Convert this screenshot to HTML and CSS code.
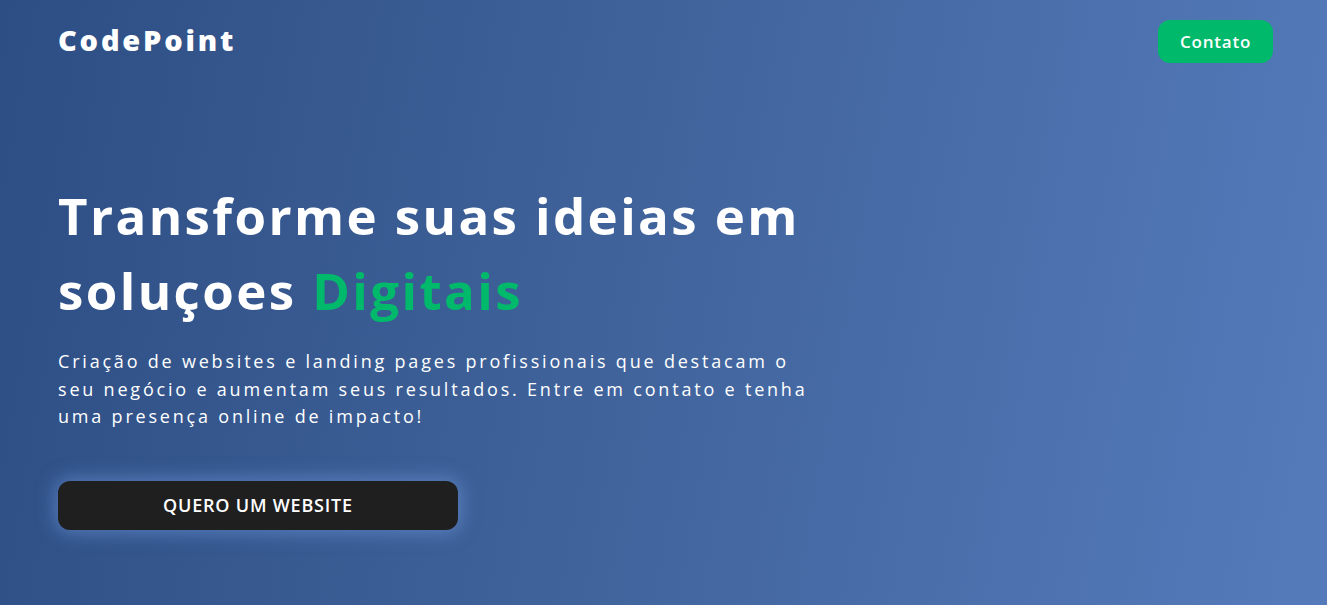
FILE: index.html
```html
<!DOCTYPE html>
<html lang="pt-BR">
<head>
<meta charset="utf-8">
<title>CodePoint</title>
<link rel="stylesheet" href="styles.css">
</head>
<body>
<div class="page">
  <header class="header">
    <div class="logo">CodePoint</div>
    <a class="contact-btn" href="#">Contato</a>
  </header>
  <main class="hero">
    <h1 class="title">Transforme suas ideias em<br>soluçoes <span class="accent">Digitais</span></h1>
    <p class="lead">Criação de websites e landing pages profissionais que destacam o seu negócio e aumentam seus resultados. Entre em contato e tenha uma presença online de impacto!</p>
    <a class="cta" href="#">QUERO UM WEBSITE</a>
  </main>
</div>
</body>
</html>
```
FILE: styles.css
```css
* { box-sizing: border-box; }
html, body { margin: 0; padding: 0; }
body {
  font-family: "Open Sans", "DejaVu Sans", sans-serif;
  color: #fff;
}
.page {
  width: 100%;
  height: 605px;
  overflow: hidden;
  background: linear-gradient(100deg, #2d4e84 0%, #3f629a 45%, #557bbb 100%);
}
.header {
  display: flex;
  justify-content: space-between;
  align-items: flex-start;
  padding: 20px 54px 0 58px;
}
.logo {
  font-size: 29px;
  font-weight: 800;
  letter-spacing: 2.8px;
  line-height: 40px;
}
.contact-btn {
  display: flex;
  align-items: center;
  justify-content: center;
  width: 115px;
  height: 43px;
  border-radius: 12px;
  background: #00b96b;
  color: #fff;
  text-decoration: none;
  font-size: 17px;
  font-weight: 600;
  letter-spacing: 0.8px;
}
.hero {
  padding: 115px 0 0 58px;
}
.title {
  margin: 0;
  font-size: 51px;
  font-weight: 700;
  line-height: 75px;
  letter-spacing: 2.4px;
}
.accent { color: #00b96b; }
.lead {
  margin: 20px 0 0;
  width: 765px;
  font-size: 18px;
  line-height: 27.5px;
  letter-spacing: 2.8px;
  font-weight: 400;
}
.cta {
  display: flex;
  align-items: center;
  justify-content: center;
  margin-top: 50px;
  width: 400px;
  height: 49px;
  border-radius: 12px;
  background: #1f1f1f;
  color: #fff;
  text-decoration: none;
  font-size: 18px;
  font-weight: 600;
  letter-spacing: 0.8px;
  box-shadow: 0 0 18px 3px rgba(120, 160, 230, 0.5);
}
```
